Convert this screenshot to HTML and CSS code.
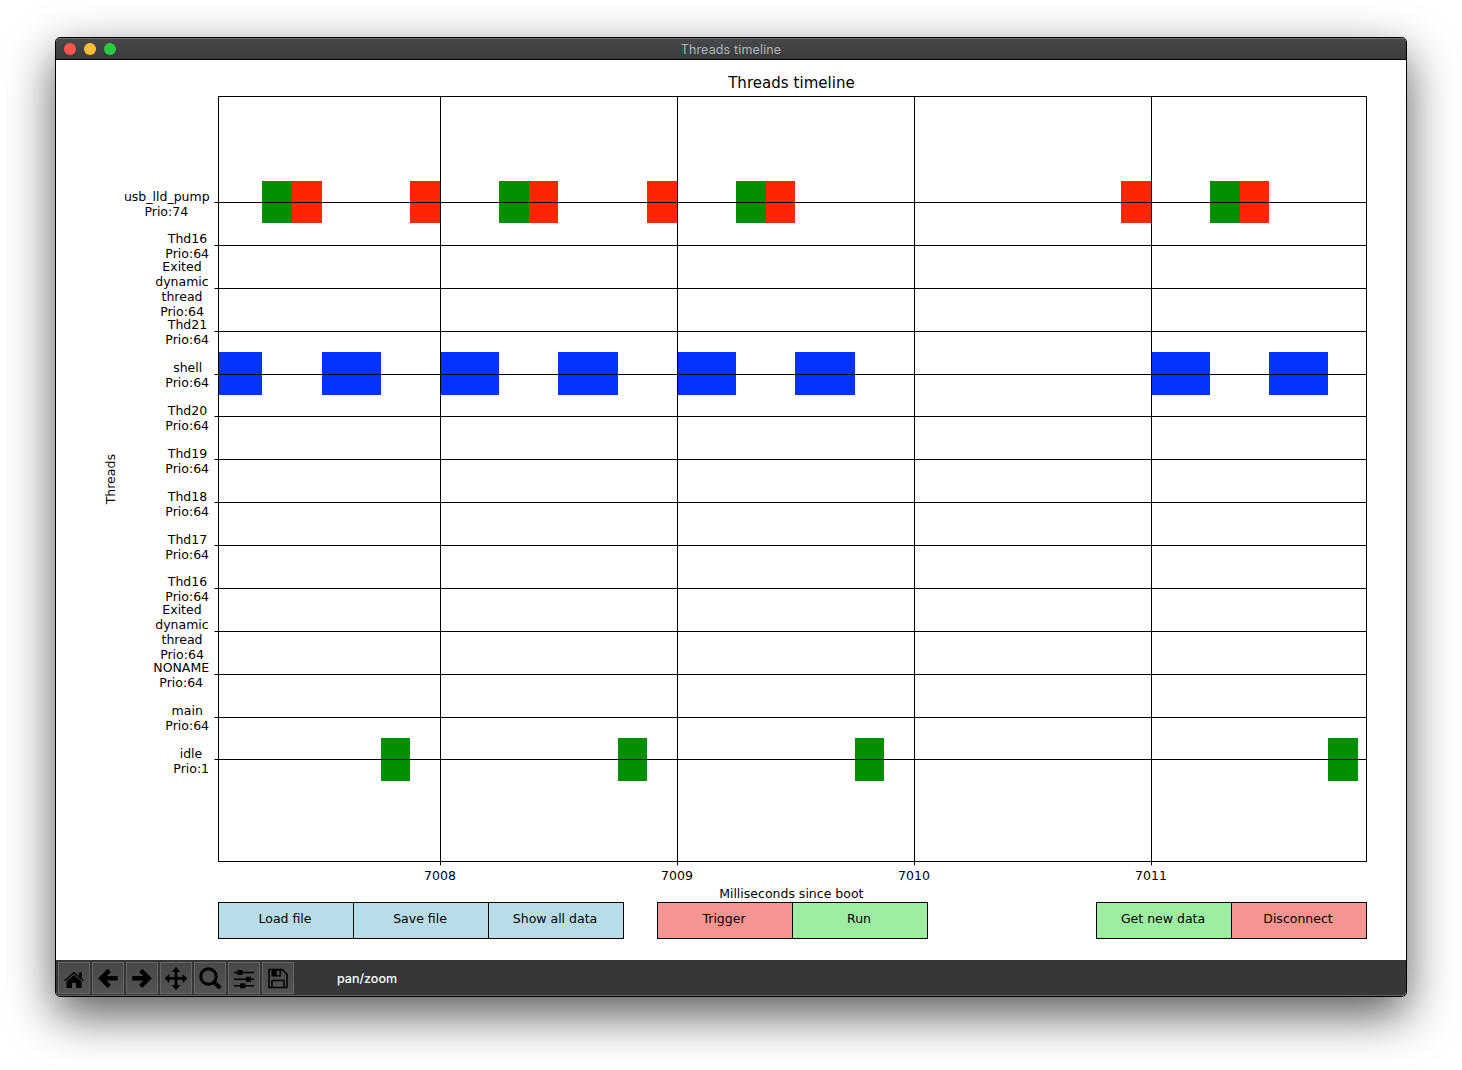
FILE: index.html
```html
<!DOCTYPE html>
<html lang="en">
<head>
<meta charset="utf-8">
<title>Threads timeline</title>
<link rel="stylesheet" href="styles.css">
</head>
<body>
<main class="window">
  <header class="titlebar">
    <div class="lights"><i class="light close"></i><i class="light minimize"></i><i class="light zoom"></i></div>
    <h1 class="title">Threads timeline</h1>
  </header>
  <section class="figure">
    <svg class="chart" width="1350" height="842" viewBox="56 60 1350 842">
      <text class="heading" x="791.5" y="88">Threads timeline</text>
      <g class="running">
        <path d="M262 181h30v42h-30zM499 181h30v42h-30zM736 181h30v42h-30zM1210 181h30v42h-30z"/>
        <path d="M381 738h29v43h-29zM618 738h29v43h-29zM855 738h29v43h-29zM1328 738h30v43h-30z"/>
      </g>
      <path class="pump" d="M292 181h30v42h-30zM410 181h30v42h-30zM529 181h29v42h-29zM647 181h30v42h-30zM766 181h29v42h-29zM1121 181h30v42h-30zM1240 181h29v42h-29z"/>
      <path class="shell" d="M219 352h43v43h-43zM322 352h59v43h-59zM440 352h59v43h-59zM558 352h60v43h-60zM677 352h59v43h-59zM795 352h60v43h-60zM1151 352h59v43h-59zM1269 352h59v43h-59z"/>
      <path class="grid" d="M214.500 202.500H1366M214.500 245.500H1366M214.500 288.500H1366M214.500 331.500H1366M214.500 374.500H1366M214.500 416.500H1366M214.500 459.500H1366M214.500 502.500H1366M214.500 545.500H1366M214.500 588.500H1366M214.500 631.500H1366M214.500 674.500H1366M214.500 717.500H1366M214.500 759.500H1366"/>
      <path class="grid" d="M440.500 96V865.300M677.500 96V865.300M914.500 96V865.300M1151.500 96V865.300"/>
      <rect class="grid" x="218.500" y="96.500" width="1148" height="765"/>
      <g class="labels">
        <text x="166.800" y="201">usb_lld_pump</text><text x="166.300" y="216">Prio:74</text>
        <text x="187.500" y="243">Thd16</text><text x="187.200" y="258">Prio:64</text>
        <text x="182" y="271">Exited</text><text x="182" y="286">dynamic</text><text x="182" y="301">thread</text><text x="182" y="316">Prio:64</text>
        <text x="187.500" y="329">Thd21</text><text x="187.200" y="344">Prio:64</text>
        <text x="187.700" y="372">shell</text><text x="187.200" y="387">Prio:64</text>
        <text x="187.500" y="415">Thd20</text><text x="187.200" y="430">Prio:64</text>
        <text x="187.500" y="458">Thd19</text><text x="187.200" y="473">Prio:64</text>
        <text x="187.500" y="501">Thd18</text><text x="187.200" y="516">Prio:64</text>
        <text x="187.500" y="544">Thd17</text><text x="187.200" y="559">Prio:64</text>
        <text x="187.500" y="586">Thd16</text><text x="187.200" y="601">Prio:64</text>
        <text x="182" y="614">Exited</text><text x="182" y="629">dynamic</text><text x="182" y="644">thread</text><text x="182" y="659">Prio:64</text>
        <text x="181.200" y="672">NONAME</text><text x="181.200" y="687">Prio:64</text>
        <text x="187.200" y="715">main</text><text x="187.200" y="730">Prio:64</text>
        <text x="191" y="758">idle</text><text x="191.200" y="773">Prio:1</text>
        <text x="440" y="880">7008</text><text x="677" y="880">7009</text><text x="914" y="880">7010</text><text x="1151" y="880">7011</text>
        <text x="791.300" y="898">Milliseconds since boot</text>
        <text transform="translate(115 479.200) rotate(-90)">Threads</text>
      </g>
    </svg>
    <div class="actions">
      <div class="group"><button class="action blue">Load file</button><button class="action blue">Save file</button><button class="action blue">Show all data</button></div>
      <div class="group"><button class="action red">Trigger</button><button class="action green">Run</button></div>
      <div class="group"><button class="action green">Get new data</button><button class="action red">Disconnect</button></div>
    </div>
  </section>
  <footer class="toolbar">
    <button class="tool" aria-label="Home"><svg viewBox="0 0 32 32"><path d="M8.500 19.300 16 13l7.500 6.300V26H18v-5h-4v5H8.500z"/><path d="M21 10.500h2.800v6L21 14z"/><path class="line" d="M6.500 18.800 16 10.800l9.500 8" stroke-width="1.500"/></svg></button>
    <button class="tool" aria-label="Back"><svg viewBox="0 0 32 32"><path class="line" d="M25.700 16.300H10M17.300 8.300 9.300 16.300l8 8" stroke-width="4.500"/></svg></button>
    <button class="tool" aria-label="Forward"><svg viewBox="0 0 32 32"><path class="line" d="M6.300 16.300H22M14.700 8.300l8 8-8 8" stroke-width="4.500"/></svg></button>
    <button class="tool" aria-label="Pan"><svg viewBox="0 0 32 32"><path d="M16 5l4.300 5h-2.900v5.100h5.200V12l4.700 4.500-4.700 4.500v-3.200h-5.200V23h2.900L16 28l-4.300-5h2.900v-5.200H9.300V21l-4.700-4.500L9.300 12v3.100h5.300V10h-2.900z"/></svg></button>
    <button class="tool" aria-label="Zoom"><svg viewBox="0 0 32 32"><circle class="line" cx="14.500" cy="14.500" r="7.700" stroke-width="3"/><path class="line" d="M20.500 20.500 25 25" stroke-width="4" stroke-linecap="round"/></svg></button>
    <button class="tool" aria-label="Configure subplots"><svg viewBox="0 0 32 32"><path class="line" d="M6 10.500h20M6 17.200h20M6 23.800h20" stroke-width="1.500"/><path d="M9.500 8h5v5h-5zM18 14.700h5v5h-5zM12.200 21.300h5v5h-5z"/></svg></button>
    <button class="tool" aria-label="Save"><svg viewBox="0 0 32 32"><path class="line" d="M7 7.500h13.300l4.700 4.700V25.500H7zM10 25v-6.500h12V25" stroke-width="1.500" stroke-linejoin="round"/><path fill-rule="evenodd" d="M9.500 7.500H19v7H9.500zM14.700 8.500v4.800h2.800V8.500z"/></svg></button>
    <span class="mode">pan/zoom</span>
  </footer>
</main>
</body>
</html>
```
FILE: styles.css
```css
* { box-sizing: border-box; }
body {
  margin: 0;
  height: 1070px;
  padding: 37px 55px 0;
  background: #fff;
  overflow: hidden;
}
.window {
  width: 1352px;
  height: 960px;
  display: flex;
  flex-direction: column;
  border: 1px solid #000;
  border-radius: 5px;
  overflow: hidden;
  background: #fff;
  box-shadow: 0 18px 48px rgba(0, 0, 0, .65);
}
.titlebar {
  height: 22px;
  flex: none;
  display: grid;
  grid-template-columns: 1fr auto 1fr;
  align-items: center;
  border-bottom: 1px solid #000;
  background: linear-gradient(#48494a, #3a3b3c);
  box-shadow: inset 0 1px #6c6d6e;
}
.lights { display: flex; gap: 8px; padding-left: 8px; }
.light { width: 12px; height: 12px; border-radius: 50%; }
.close { background: #ff5650; }
.minimize { background: #ffbe2f; }
.zoom { background: #29cc41; }
.title {
  margin: 2px 0 0;
  font: 400 12.5px/20px Inter, "Liberation Sans", sans-serif;
  letter-spacing: .15px;
  color: #b3b4b4;
}
.figure { height: 900px; flex: none; }
.chart { display: block; }
.chart text {
  font-family: "DejaVu Sans", sans-serif;
  font-size: 12.5px;
  text-anchor: middle;
}
.chart .heading { font-size: 15px; letter-spacing: .04px; }
.running { fill: #009000; }
.pump { fill: #ff2600; }
.shell { fill: #0433ff; }
.grid { fill: none; stroke: #000; stroke-width: 1; }
.actions { display: flex; padding-left: 162px; }
.group { display: flex; }
.group:nth-child(2) { margin-left: 33px; }
.group:nth-child(3) { margin-left: 168px; }
.action {
  width: 136px;
  height: 37px;
  padding: 0 2px 5px 0;
  border: 1px solid #000;
  font: 12.5px "DejaVu Sans", sans-serif;
  color: #000;
}
.action + .action { margin-left: -1px; }
.blue { background: #b9dde8; }
.red { background: #f59591; }
.green { background: #9deea1; }
.toolbar {
  height: 36px;
  flex: none;
  display: flex;
  align-items: flex-start;
  gap: 2px;
  padding: 2px;
  border-radius: 0 0 4px 4px;
  background: #363739;
  box-shadow: inset 0 -1px #626361;
}
.tool {
  width: 32px;
  height: 32px;
  padding: 0;
  display: flex;
  border: 1px solid #646668;
  background: linear-gradient(#474849, #515355);
}
.tool svg { width: 32px; height: 32px; margin: -1px; flex: none; }
.line { fill: none; stroke: #000; }
.mode {
  margin-left: 41px;
  font: 500 12.5px/33px Inter, "Liberation Sans", sans-serif;
  color: #fff;
}
```
